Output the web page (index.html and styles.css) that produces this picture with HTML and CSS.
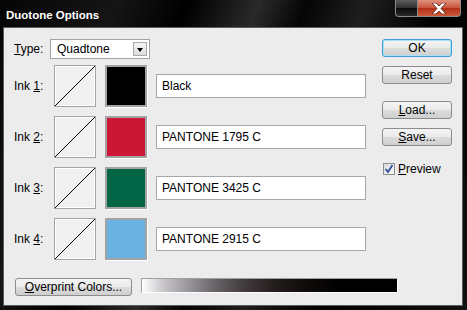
FILE: index.html
```html
<!DOCTYPE html>
<html>
<head>
<meta charset="utf-8" />
<title>Duotone Options</title>
<link rel="stylesheet" href="styles.css">
</head>
<body>
<div class="window">
	<div class="titlebar">
		<span class="title">Duotone Options</span>
		<div class="capbtns">
			<span class="cap-dark"></span>
			<span class="cap-close">
				<svg width="16" height="11" viewBox="0 0 16 11"><path d="M1 0h4l3 3 3-3h4l-5 5.5 5 5.5h-4l-3-3-3 3h-4l5-5.5z" fill="#fff" stroke="#5a1a10" stroke-width="0.8"/></svg>
			</span>
		</div>
	</div>
	<div class="client">
		<div class="main">
			<div class="left">
				<div class="type-row">
					<span class="lbl"><u>T</u>ype:</span>
					<div class="select"><span>Quadtone</span><span class="arrow"></span></div>
				</div>
				<div class="ink-row">
					<span class="ink-lbl">Ink <u>1</u>:</span>
					<div class="curve"><svg width="40" height="40"><line x1="0" y1="40" x2="40" y2="0" stroke="#000" stroke-width="1"/></svg></div>
					<div class="swatch black"></div>
					<div class="field">Black</div>
				</div>
				<div class="ink-row">
					<span class="ink-lbl">Ink <u>2</u>:</span>
					<div class="curve"><svg width="40" height="40"><line x1="0" y1="40" x2="40" y2="0" stroke="#000" stroke-width="1"/></svg></div>
					<div class="swatch red"></div>
					<div class="field">PANTONE 1795 C</div>
				</div>
				<div class="ink-row">
					<span class="ink-lbl">Ink <u>3</u>:</span>
					<div class="curve"><svg width="40" height="40"><line x1="0" y1="40" x2="40" y2="0" stroke="#000" stroke-width="1"/></svg></div>
					<div class="swatch green"></div>
					<div class="field">PANTONE 3425 C</div>
				</div>
				<div class="ink-row">
					<span class="ink-lbl">Ink <u>4</u>:</span>
					<div class="curve"><svg width="40" height="40"><line x1="0" y1="40" x2="40" y2="0" stroke="#000" stroke-width="1"/></svg></div>
					<div class="swatch blue"></div>
					<div class="field">PANTONE 2915 C</div>
				</div>
			</div>
			<div class="right">
				<div class="btn ok">OK</div>
				<div class="btn reset">Reset</div>
				<div class="btn load"><u>L</u>oad...</div>
				<div class="btn save"><u>S</u>ave...</div>
				<div class="preview">
					<span class="check"><svg width="10" height="10" viewBox="0 0 10 10"><path d="M1.5 5l2.5 3 4.5-7" fill="none" stroke="#2b4f9e" stroke-width="1.8"/></svg></span>
					<span><u>P</u>review</span>
				</div>
			</div>
		</div>
		<div class="bottom-row">
			<div class="btn overprint"><u>O</u>verprint Colors...</div>
			<div class="ramp"></div>
		</div>
	</div>
</div>
</body>
</html>
```

FILE: styles.css
```css
html, body { margin: 0; padding: 0; }
body { width: 467px; height: 310px; overflow: hidden; font-family: "Liberation Sans", Arial, sans-serif; font-size: 12px; color: #000; }

.window { width: 467px; height: 310px; box-sizing: border-box; padding: 0 4px 4px 3px; display: flex; flex-direction: column;
	background: linear-gradient(112deg, #050505 0%, #151515 20%, #000 32%, #2a2a2a 44%, #050505 52%, #1e1e1e 62%, #000 75%, #111 100%); }

.titlebar { height: 27px; display: flex; justify-content: space-between; align-items: flex-start; }
.title { color: #fff; font-weight: bold; font-size: 11.5px; margin: 9px 0 0 3px; }
.capbtns { display: flex; margin-right: 2px; }
.cap-dark { width: 23px; height: 17px; border: 1px solid #8a8a8a; border-top: none; border-radius: 0 0 0 4px; box-sizing: border-box;
	background: linear-gradient(#5e5e5e, #2e2e2e 50%, #0a0a0a 51%, #2a2a2a); }
.cap-close { width: 43px; height: 17px; border: 1px solid #8a8a8a; border-top: none; border-left: none; border-radius: 0 0 4px 0; box-sizing: border-box;
	background: linear-gradient(#e0917e, #c8533c 50%, #b02e16 51%, #cc5a3a); display: flex; justify-content: center; align-items: center; }

.client { flex: 1; background: #ececec; border: 1px solid #5c5c5c; box-sizing: border-box; padding: 11px 0 0 10px; }
.main { display: flex; }
.left { width: 368px; }
.right { width: 70px; display: flex; flex-direction: column; }

.type-row { height: 20px; display: flex; align-items: center; }
.lbl { width: 36px; }
.select { width: 100px; height: 20px; box-sizing: border-box; border: 1px solid #a3a3a3; background: #fff; display: flex; align-items: center; justify-content: space-between; padding: 0 2px 0 6px; }
.arrow { width: 14px; height: 14px; box-sizing: border-box; border: 1px solid #a8a8a8; background: linear-gradient(#f4f4f4, #dcdcdc); position: relative; }
.arrow::after { content: ""; position: absolute; left: 3px; top: 5px; border-left: 3.5px solid transparent; border-right: 3.5px solid transparent; border-top: 4px solid #000; }

.ink-row { height: 42px; display: flex; align-items: center; margin-top: 9px; }
.type-row + .ink-row { margin-top: 6px; }
.ink-lbl { width: 40px; }
.curve, .swatch { width: 42px; height: 42px; box-sizing: border-box; border: 1px solid #a3a3a3; box-shadow: inset 0 0 0 1px #fff; }
.curve { background: #f0f0f0; display: flex; }
.curve svg { margin: auto; }
.swatch { margin-left: 9px; border: 2px solid #a3a3a3; box-shadow: 1px 1px 0 #fff; }
.black { background: #000; }
.red { background: #cc1636; }
.green { background: #006646; }
.blue { background: #69b2e2; }
.field { margin-left: 9px; width: 210px; height: 24px; box-sizing: border-box; border: 1px solid #a8a8a8; background: #fff; padding-left: 5px; line-height: 22px; }

.btn { height: 18px; box-sizing: border-box; border: 1px solid #8c8c8c; border-radius: 3px; text-align: center; line-height: 16px;
	background: linear-gradient(#f4f4f4, #ebebeb 50%, #dcdcdc 51%, #cfcfcf); }
.right .btn { width: 70px; }
.ok { border-color: #3c9ed6; box-shadow: inset 0 0 0 1px #a8e0f8; }
.reset { margin-top: 9px; }
.load { margin-top: 17px; }
.save { margin-top: 9px; }
.preview { margin-top: 17px; display: flex; align-items: center; height: 12px; padding-left: 1px; }
.check { width: 12px; height: 12px; box-sizing: border-box; border: 1px solid #8f8f8f; background: linear-gradient(135deg, #dcdcdc, #fafafa); display: flex; align-items: center; justify-content: center; margin-right: 3px; }

.bottom-row { display: flex; align-items: flex-start; margin-top: 18px; padding-left: 1px; }
.overprint { width: 117px; }
.ramp { width: 257px; height: 15px; margin-left: 9px; box-sizing: border-box; border-top: 1px solid #a0a0a0; border-left: 1px solid #a0a0a0; border-bottom: 1px solid #fff; border-right: 1px solid #fff;
	background: linear-gradient(to right, #fff 0%, #c9c7cb 8%, #9a979c 18%, #6b666b 28%, #413b3d 40%, #231d1d 52%, #0f0a0a 65%, #000 78%, #000 100%); }
```
